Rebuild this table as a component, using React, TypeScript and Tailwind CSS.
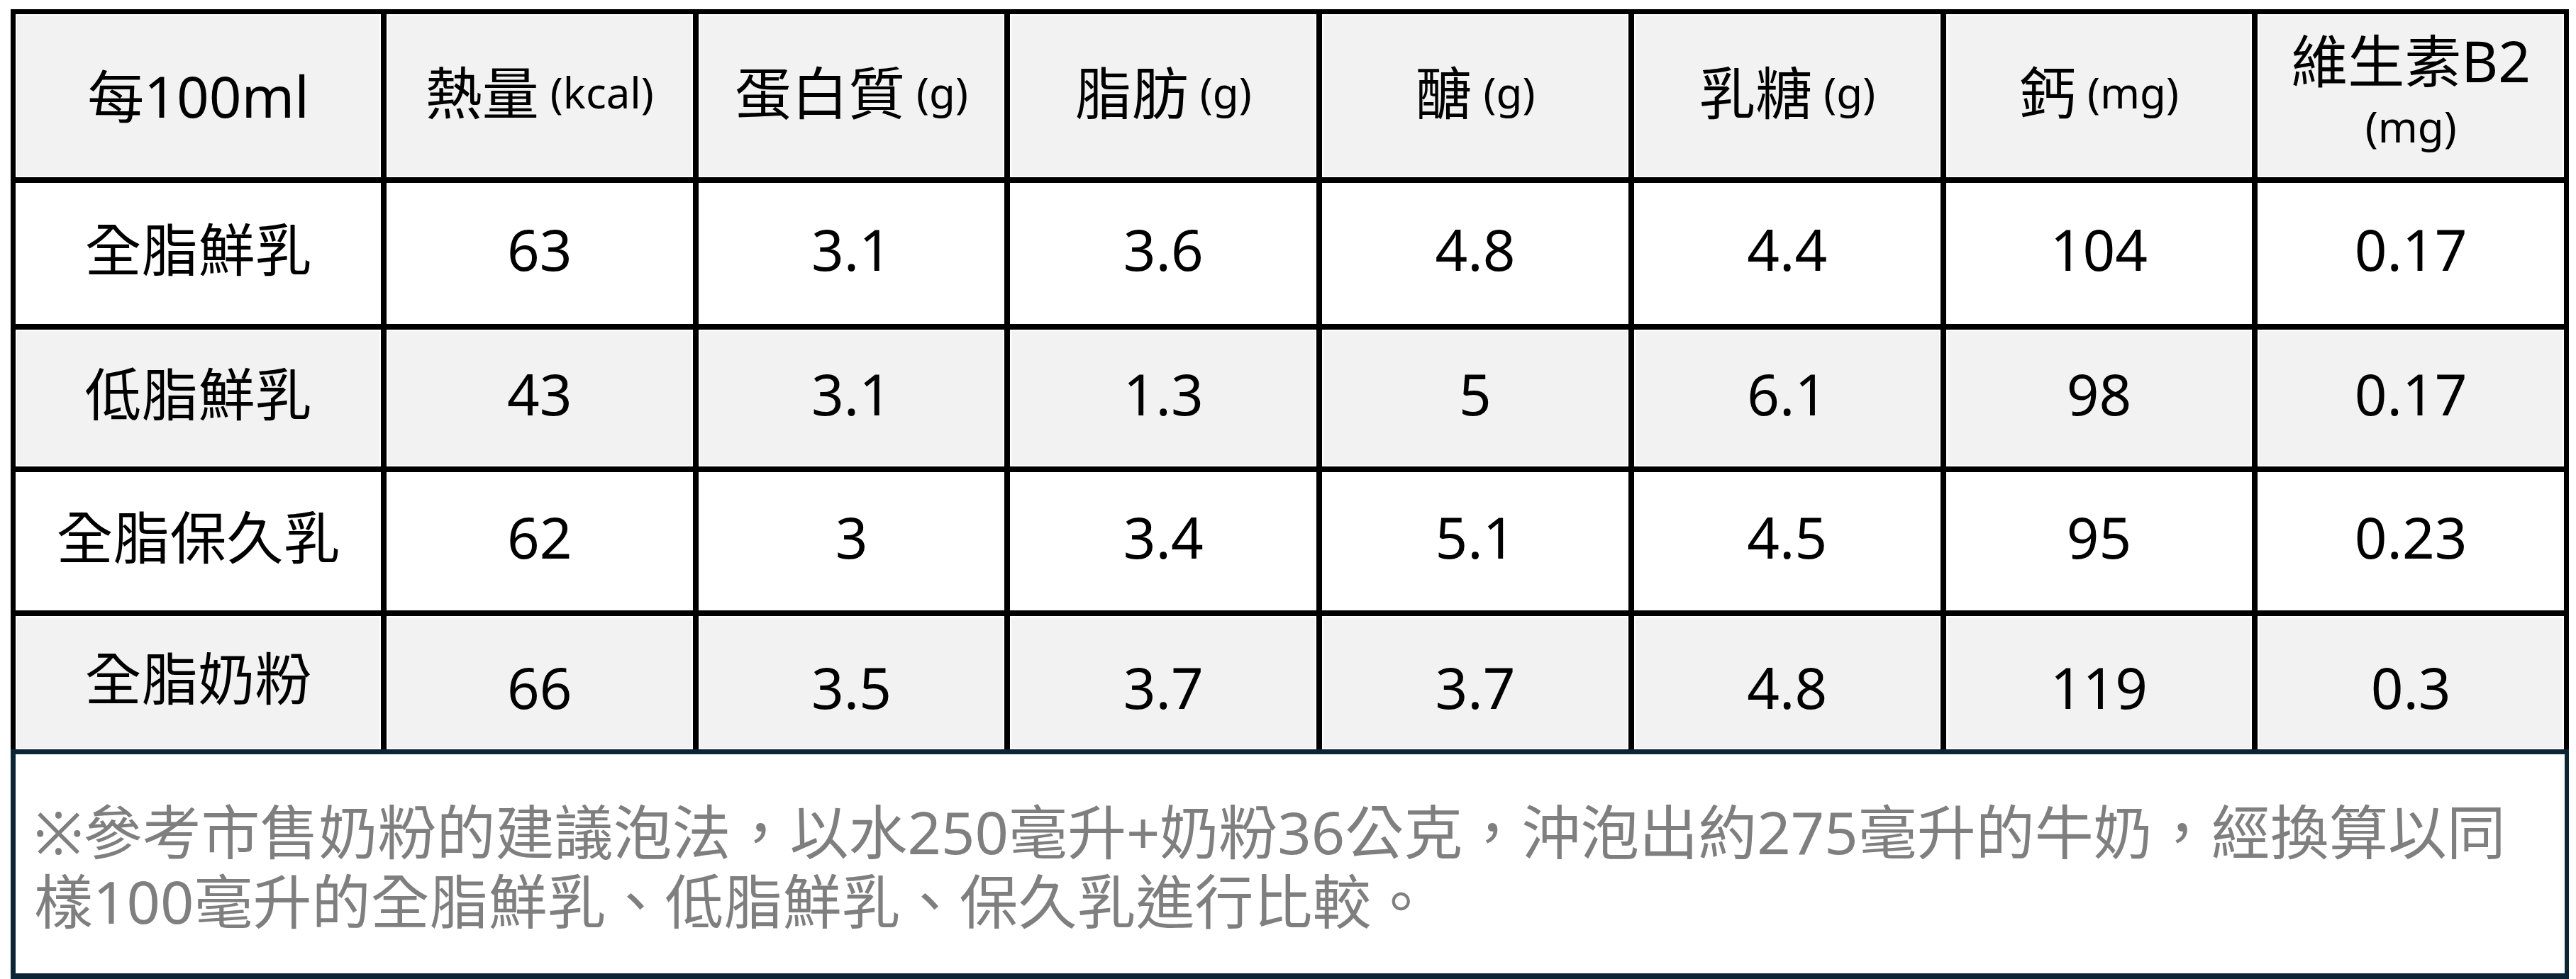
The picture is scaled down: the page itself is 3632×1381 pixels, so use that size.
const headers = [
  { name: '熱量', unit: '(kcal)' },
  { name: '蛋白質', unit: '(g)' },
  { name: '脂肪', unit: '(g)' },
  { name: '醣', unit: '(g)' },
  { name: '乳糖', unit: '(g)' },
  { name: '鈣', unit: '(mg)' },
];

const rows = [
  { label: '全脂鮮乳', values: ['63', '3.1', '3.6', '4.8', '4.4', '104', '0.17'], gray: false, h: 'h-[199px]', pt: '' },
  { label: '低脂鮮乳', values: ['43', '3.1', '1.3', '5', '6.1', '98', '0.17'], gray: true, h: 'h-[193px]', pt: '' },
  { label: '全脂保久乳', values: ['62', '3', '3.4', '5.1', '4.5', '95', '0.23'], gray: false, h: 'h-[195px]', pt: '' },
  { label: '全脂奶粉', values: ['66', '3.5', '3.7', '3.7', '4.8', '119', '0.3'], gray: true, h: 'h-[188px]', pt: 'pt-[26px]' },
];

export default function App() {
  return (
    <div className="min-h-screen bg-white pt-[13px] pl-[15px] font-['Noto_Sans','Noto_Sans_CJK_TC',sans-serif] text-black">
      <div className="w-[3607px]">
        <div className="bg-black px-[7px] pt-[7px]">
          <div className="grid grid-cols-[515px_repeat(7,1fr)] gap-x-[8px] gap-y-[8px]">
            {/* header */}
            <div className="h-[230px] bg-[#f2f2f2] border-2 border-white flex items-center justify-center text-[80px] leading-none">
              每100ml
            </div>
            {headers.map((h) => (
              <div
                key={h.name}
                className="h-[230px] bg-[#f2f2f2] border-2 border-white flex items-center justify-center pb-[10px] whitespace-nowrap"
              >
                <span className="text-[80px] leading-none">{h.name}</span>
                <span className="text-[60px] leading-none ml-[16px]">{h.unit}</span>
              </div>
            ))}
            <div className="h-[230px] bg-[#f2f2f2] border-2 border-white flex flex-col items-center justify-center pb-[14px]">
              <span className="text-[80px] leading-[100px]">維生素B2</span>
              <span className="text-[60px] leading-[86px]">(mg)</span>
            </div>

            {rows.map((r) => (
              <>
                <div
                  key={r.label}
                  className={`${r.h} ${r.gray ? 'bg-[#f2f2f2] border-2 border-white' : 'bg-white'} flex items-center justify-center pb-[14px] text-[80px] leading-none`}
                >
                  {r.label}
                </div>
                {r.values.map((v, i) => (
                  <div
                    key={r.label + i}
                    className={`${r.h} ${r.gray ? 'bg-[#f2f2f2] border-2 border-white' : 'bg-white'} ${r.pt} flex items-center justify-center pb-[14px] text-[80px] leading-none`}
                  >
                    {v}
                  </div>
                ))}
              </>
            ))}
          </div>
        </div>

        <div className="h-[324px] border-t-[7px] border-l-[7px] border-r-[6px] border-b-[8px] border-[#0b2536] bg-white flex flex-col justify-center pl-[26px] pt-[6px] text-[#7f7f7f] text-[83px] whitespace-nowrap">
          <p className="leading-[98px]">※參考市售奶粉的建議泡法，以水250毫升+奶粉36公克，沖泡出約275毫升的牛奶，經換算以同</p>
          <p className="leading-[98px]">樣100毫升的全脂鮮乳、低脂鮮乳、保久乳進行比較。</p>
        </div>
      </div>
    </div>
  );
}
